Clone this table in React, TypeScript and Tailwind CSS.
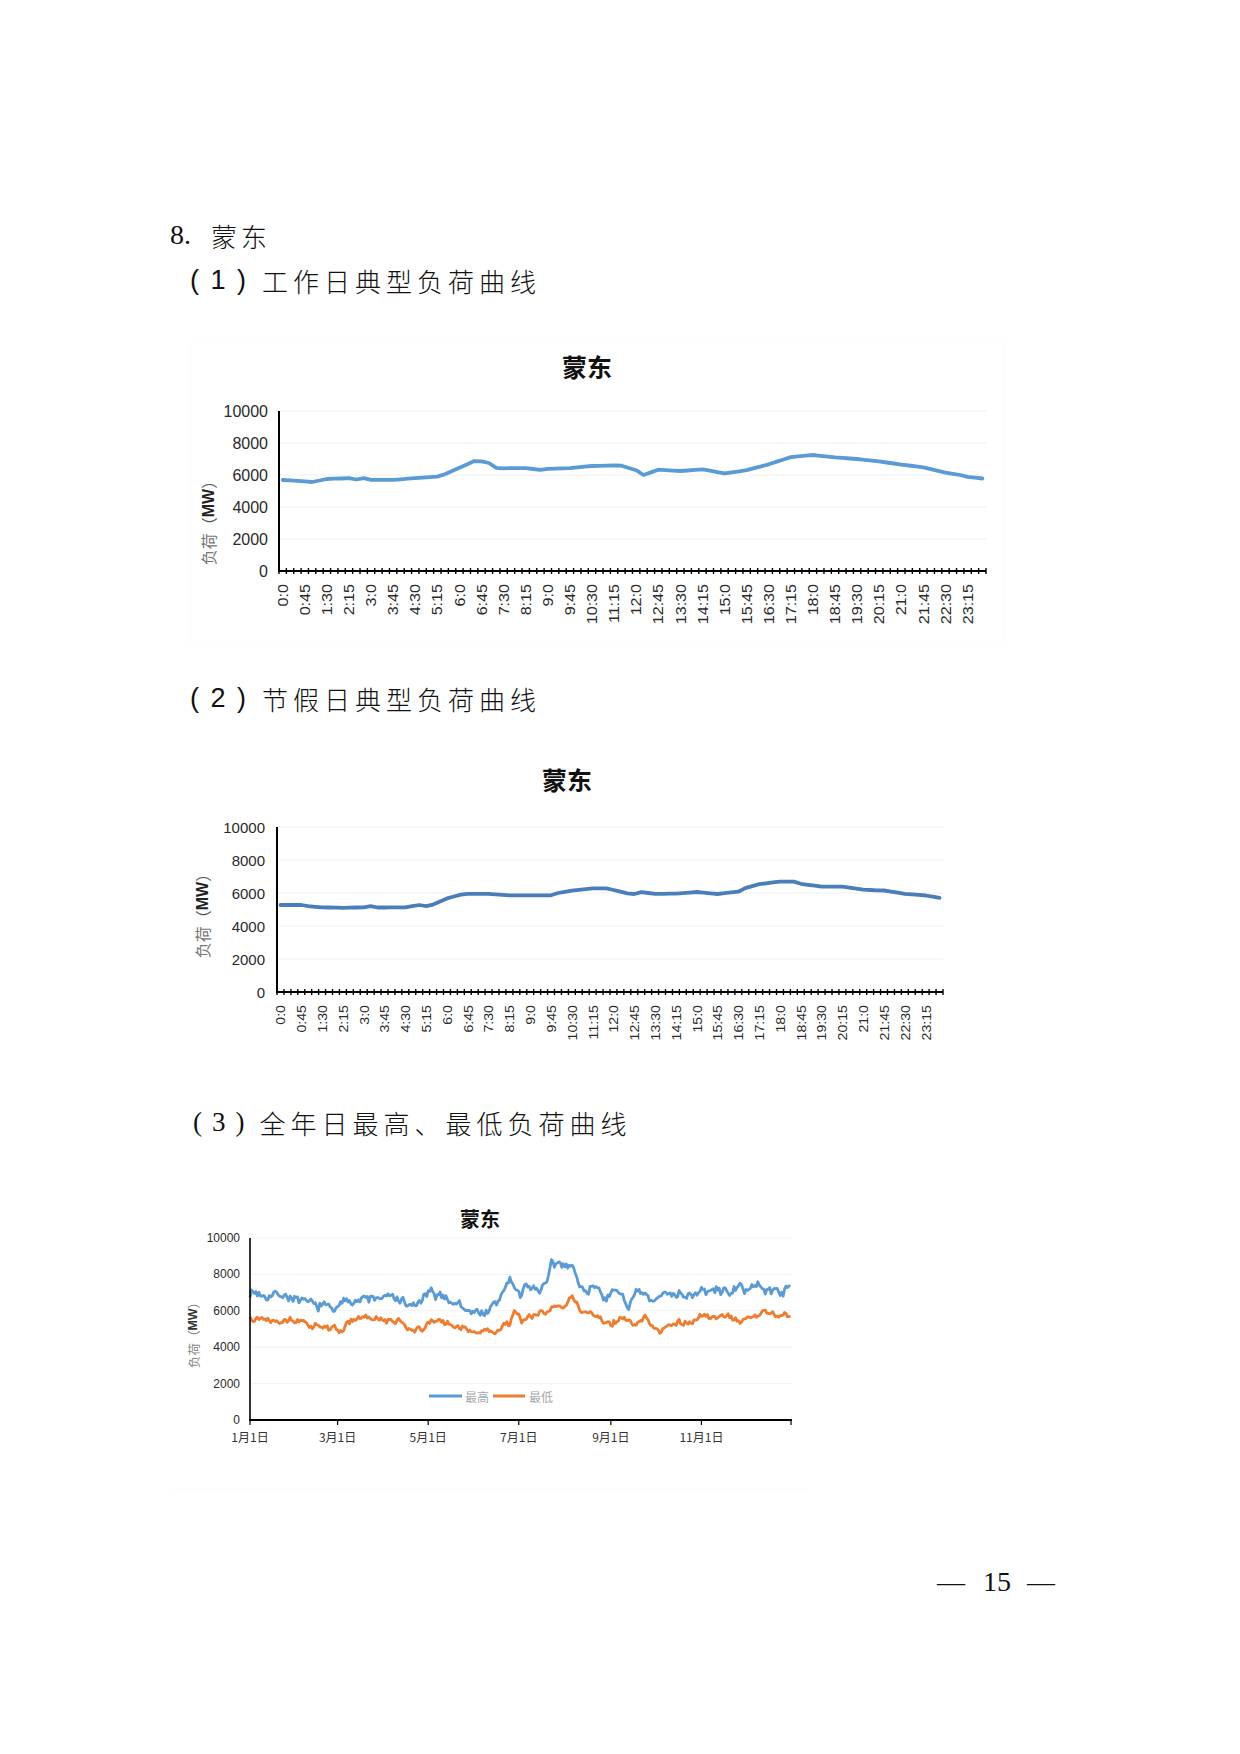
import React from "react";

type Pt = [number, number];

function interp(a: Pt[], t: number): number {
  if (t <= a[0][0]) return a[0][1];
  for (let i = 1; i < a.length; i++) {
    if (t <= a[i][0]) {
      const [t0, v0] = a[i - 1];
      const [t1, v1] = a[i];
      return v0 + ((v1 - v0) * (t - t0)) / (t1 - t0);
    }
  }
  return a[a.length - 1][1];
}

const q = (s: string) => {
  const [h, m] = s.split(":").map(Number);
  return h * 4 + m / 15;
};

function mulberry32(seed: number) {
  let a = seed;
  return () => {
    a |= 0;
    a = (a + 0x6d2b79f5) | 0;
    let t = Math.imul(a ^ (a >>> 15), 1 | a);
    t = (t + Math.imul(t ^ (t >>> 7), 61 | t)) ^ t;
    return ((t ^ (t >>> 14)) >>> 0) / 4294967296;
  };
}

const work: [string, number][] = [
  ["0:00", 5690], ["0:45", 5600], ["1:00", 5560], ["1:30", 5750], ["2:15", 5800], ["2:30", 5720],
  ["2:45", 5800], ["3:00", 5700], ["3:45", 5700], ["4:30", 5800], ["5:15", 5900], ["5:30", 6050],
  ["6:00", 6450], ["6:30", 6870], ["6:45", 6850], ["7:00", 6750], ["7:15", 6450], ["7:30", 6420],
  ["8:15", 6430], ["8:45", 6320], ["9:00", 6380], ["9:45", 6430], ["10:30", 6560], ["11:15", 6600],
  ["11:30", 6580], ["12:00", 6300], ["12:15", 6000], ["12:45", 6330], ["13:30", 6250], ["14:15", 6350],
  ["15:00", 6100], ["15:45", 6300], ["16:30", 6670], ["17:15", 7120], ["18:00", 7250], ["18:45", 7100],
  ["19:30", 7000], ["20:15", 6850], ["21:00", 6650], ["21:45", 6480], ["22:30", 6150], ["23:00", 6000],
  ["23:15", 5880], ["23:45", 5780],
];

const holiday: [string, number][] = [
  ["0:00", 5270], ["0:45", 5270], ["1:00", 5200], ["1:30", 5130], ["2:15", 5100], ["3:00", 5130],
  ["3:15", 5200], ["3:30", 5120], ["4:30", 5130], ["5:00", 5270], ["5:15", 5200], ["5:30", 5300],
  ["6:00", 5670], ["6:30", 5900], ["6:45", 5950], ["7:30", 5950], ["8:15", 5860], ["9:45", 5860],
  ["10:00", 6000], ["10:30", 6140], ["11:15", 6280], ["11:45", 6280], ["12:00", 6180], ["12:30", 5980],
  ["12:45", 5940], ["13:00", 6050], ["13:30", 5950], ["14:15", 5960], ["15:00", 6060], ["15:45", 5940],
  ["16:30", 6080], ["16:45", 6300], ["17:15", 6540], ["18:00", 6690], ["18:30", 6690], ["18:45", 6560],
  ["19:30", 6380], ["20:15", 6380], ["21:00", 6200], ["21:45", 6150], ["22:30", 5950], ["23:15", 5850],
  ["23:45", 5700],
];

const toSeries = (a: [string, number][]) => {
  const pts: Pt[] = a.map(([t, v]) => [q(t), v]);
  return Array.from({ length: 96 }, (_, i) => interp(pts, i));
};

const highAnchors: Pt[] = [
  [0, 7030], [10, 6900], [20, 6950], [30, 6700], [36, 6400], [45, 6300], [55, 6200], [59, 6050],
  [65, 6700], [75, 6600], [90, 6750], [100, 6650], [108, 6200], [112, 6300], [120, 6900], [130, 6800],
  [140, 6400], [148, 5900], [160, 6000], [166, 6300], [175, 7900], [178, 7200], [182, 6700], [186, 7400],
  [195, 7200], [200, 7500], [203, 8500], [210, 8400], [217, 8800], [222, 7200], [230, 7250], [235, 7500],
  [240, 6500], [248, 7200], [255, 6300], [262, 7000], [272, 6400], [282, 7100], [295, 6900], [305, 7000],
  [315, 7100], [325, 7150], [340, 7300], [355, 7100], [364, 7150],
];

const lowAnchors: Pt[] = [
  [0, 5660], [10, 5600], [20, 5550], [30, 5550], [40, 5200], [50, 5100], [62, 4900], [68, 5500],
  [78, 5600], [90, 5450], [100, 5400], [114, 4900], [120, 5300], [130, 5400], [140, 5100], [150, 4950],
  [155, 4800], [165, 4850], [175, 5350], [178, 6000], [183, 5500], [190, 5700], [200, 5900], [205, 6300],
  [212, 6400], [217, 6780], [224, 5860], [232, 5770], [243, 5220], [250, 5680], [260, 5130], [266, 5590],
  [276, 4850], [285, 5410], [298, 5320], [303, 5680], [312, 5600], [321, 5680], [331, 5320], [338, 5600],
  [347, 5950], [354, 5800], [364, 5770],
];

const yearSeries = (anchors: Pt[], seed: number, walk: number, white: number) => {
  const r = mulberry32(seed);
  let w = 0;
  return Array.from({ length: 365 }, (_, i) => {
    w = 0.55 * w + (r() - 0.5) * walk;
    return interp(anchors, i) + w + (r() - 0.5) * white;
  });
};

const WORK = toSeries(work);
const HOLI = toSeries(holiday);
const HIGH = yearSeries(highAnchors, 7, 420, 200);
const LOW = yearSeries(lowAnchors, 13, 260, 130);

type DayChartProps = {
  w: number;
  h: number;
  x0: number;
  x1: number;
  yTop: number;
  yBot: number;
  data: number[];
  color: string;
  titleX: number;
  titleY: number;
  titleSize: number;
  yLabelRight: number;
  yLabelSize: number;
  yTitleX: number;
  yTitleY: number;
  yTitleSize: number;
  labelTop: number;
  labelSize: number;
  labelScale: number;
};

function DayChart(p: DayChartProps) {
  const step = (p.x1 - p.x0) / 96;
  const ph = p.yBot - p.yTop;
  const yOf = (v: number) => p.yBot - (v / 10000) * ph;
  const d = p.data
    .map((v, i) => `${i ? "L" : "M"}${(p.x0 + (i + 0.5) * step).toFixed(1)},${yOf(v).toFixed(1)}`)
    .join(" ");
  const labels = Array.from({ length: 32 }, (_, k) => {
    const idx = k * 3;
    return { idx, text: `${Math.floor(idx / 4)}:${(idx % 4) * 15}` };
  });
  return (
    <svg
      width={p.w}
      height={p.h}
      viewBox={`0 0 ${p.w} ${p.h}`}
      className="block font-['Liberation_Sans','Noto_Sans_CJK_SC',sans-serif]"
    >
      <text
        x={p.titleX}
        y={p.titleY}
        textAnchor="middle"
        dominantBaseline="central"
        fontSize={p.titleSize}
        fontWeight={700}
        fill="#111"
        fontFamily="'Noto Sans CJK SC', sans-serif"
      >
        蒙东
      </text>
      {[0, 2000, 4000, 6000, 8000, 10000].map((v) => (
        <g key={v}>
          {v > 0 && <line x1={p.x0} x2={p.x1} y1={yOf(v)} y2={yOf(v)} stroke="#f0f0f0" strokeWidth={1} />}
          <text
            x={p.yLabelRight}
            y={yOf(v)}
            textAnchor="end"
            dominantBaseline="central"
            fontSize={p.yLabelSize}
            fill="#2a2a2a"
          >
            {v}
          </text>
        </g>
      ))}
      <text
        transform={`translate(${p.yTitleX},${p.yTitleY}) rotate(-90)`}
        textAnchor="middle"
        dominantBaseline="central"
        fontSize={p.yTitleSize}
      >
        <tspan fill="#777" fontFamily="'Noto Sans CJK SC', serif">负荷</tspan>
        <tspan fill="#555" fontFamily="'Noto Sans CJK SC', sans-serif">（</tspan>
        <tspan fill="#222" fontWeight={700}>MW</tspan>
        <tspan fill="#555" fontFamily="'Noto Sans CJK SC', sans-serif">）</tspan>
      </text>
      <path d={d} fill="none" stroke={p.color} strokeWidth={3.8} strokeLinejoin="round" strokeLinecap="round" />
      <line x1={p.x0} x2={p.x0} y1={p.yTop} y2={p.yBot + 1} stroke="#000" strokeWidth={2} />
      <line x1={p.x0 - 1} x2={p.x1} y1={p.yBot} y2={p.yBot} stroke="#000" strokeWidth={2} />
      {Array.from({ length: 97 }, (_, i) => (
        <line
          key={i}
          x1={p.x0 + i * step}
          x2={p.x0 + i * step}
          y1={p.yBot - 3}
          y2={p.yBot + 3}
          stroke="#000"
          strokeWidth={1.4}
        />
      ))}
      {labels.map((l) => (
        <text
          key={l.idx}
          transform={`translate(${(p.x0 + (l.idx + 0.5) * step).toFixed(1)},${p.labelTop}) rotate(-90) scale(${p.labelScale},1)`}
          textAnchor="end"
          dominantBaseline="central"
          fontSize={p.labelSize}
          fill="#2a2a2a"
        >
          {l.text}
        </text>
      ))}
    </svg>
  );
}

function YearChart() {
  const W = 635;
  const H = 295;
  const x0 = 78;
  const x1 = 620;
  const yTop = 43;
  const yBot = 225;
  const step = (x1 - x0) / 365;
  const yOf = (v: number) => yBot - (v / 10000) * (yBot - yTop);
  const mk = (arr: number[]) =>
    arr.map((v, i) => `${i ? "L" : "M"}${(x0 + i * step).toFixed(1)},${yOf(v).toFixed(1)}`).join(" ");
  const months: [number, string][] = [
    [0, "1月1日"], [59, "3月1日"], [120, "5月1日"], [181, "7月1日"], [243, "9月1日"], [304, "11月1日"], [365, ""],
  ];
  return (
    <svg
      width={W}
      height={H}
      viewBox={`0 0 ${W} ${H}`}
      className="block font-['Liberation_Sans','Noto_Sans_CJK_SC',sans-serif]"
    >
      <text
        x={308}
        y={23}
        textAnchor="middle"
        dominantBaseline="central"
        fontSize={20}
        fontWeight={700}
        fill="#111"
        fontFamily="'Noto Sans CJK SC', sans-serif"
      >
        蒙东
      </text>
      {[0, 2000, 4000, 6000, 8000, 10000].map((v) => (
        <g key={v}>
          {v > 0 && <line x1={x0} x2={x1} y1={yOf(v)} y2={yOf(v)} stroke="#f3f3f3" strokeWidth={1} />}
          <text x={68} y={yOf(v)} textAnchor="end" dominantBaseline="central" fontSize={12} fill="#2a2a2a">
            {v}
          </text>
        </g>
      ))}
      <text
        transform={`translate(21,137) rotate(-90)`}
        textAnchor="middle"
        dominantBaseline="central"
        fontSize={12.5}
      >
        <tspan fill="#888" fontFamily="'Noto Sans CJK SC', serif">负荷</tspan>
        <tspan fill="#666" fontFamily="'Noto Sans CJK SC', sans-serif">（</tspan>
        <tspan fill="#333" fontWeight={700}>MW</tspan>
        <tspan fill="#666" fontFamily="'Noto Sans CJK SC', sans-serif">）</tspan>
      </text>
      <path d={mk(HIGH)} fill="none" stroke="#5b9bd5" strokeWidth={2.8} strokeLinejoin="round" />
      <path d={mk(LOW)} fill="none" stroke="#ed7d31" strokeWidth={2.8} strokeLinejoin="round" />
      <line x1={x0} x2={x0} y1={yTop} y2={yBot + 1} stroke="#000" strokeWidth={1.6} />
      <line x1={x0 - 1} x2={x1} y1={yBot} y2={yBot} stroke="#000" strokeWidth={2.2} />
      {months.map(([d, t]) => {
        const x = Math.min(x0 + d * step, x1 - 1);
        return (
          <g key={d}>
            <line x1={x} x2={x} y1={yBot} y2={yBot + 5} stroke="#000" strokeWidth={1.2} />
            {t && (
              <text
                x={x}
                y={241}
                textAnchor="middle"
                dominantBaseline="central"
                fontSize={12}
                fill="#333"
                fontFamily="'Noto Sans CJK SC', sans-serif"
              >
                {t}
              </text>
            )}
          </g>
        );
      })}
      <line x1={257} x2={290} y1={201} y2={201} stroke="#5b9bd5" strokeWidth={3} />
      <text x={293} y={201} dominantBaseline="central" fontSize={12} fill="#a8a8a8" fontFamily="'Noto Sans CJK SC', sans-serif">
        最高
      </text>
      <line x1={321} x2={353} y1={201} y2={201} stroke="#ed7d31" strokeWidth={3} />
      <text x={357} y={201} dominantBaseline="central" fontSize={12} fill="#a8a8a8" fontFamily="'Noto Sans CJK SC', sans-serif">
        最低
      </text>
    </svg>
  );
}

const cjk = "font-['Noto_Sans_CJK_SC',sans-serif] font-light";

export default function App() {
  return (
    <div className="w-[1240px] h-[1754px] bg-white flex flex-col pt-[217px] text-[#111]">
      <div className="pl-[170px] h-[36px] flex items-center">
        <span className="font-['Liberation_Serif',serif] text-[28px]">8.</span>
        <span className={`ml-[20px] text-[26px] tracking-[4px] ${cjk}`}>蒙东</span>
      </div>

      <div className="mt-[9px] pl-[190px] h-[36px] flex items-center">
        <span className="font-['Liberation_Sans',sans-serif] text-[27px] tracking-[2px]">( 1 )</span>
        <span className={`ml-[14px] text-[26px] tracking-[5px] ${cjk}`}>工作日典型负荷曲线</span>
      </div>

      <div className="mt-[42px] ml-[190px] w-[815px] h-[305px] border border-[#fcfcfc]">
        <DayChart
          w={813}
          h={303}
          x0={88}
          x1={795}
          yTop={70}
          yBot={230}
          data={WORK}
          color="#5b9bd5"
          titleX={396}
          titleY={25}
          titleSize={25}
          yLabelRight={77}
          yLabelSize={16}
          yTitleX={17}
          yTitleY={178}
          yTitleSize={16}
          labelTop={243}
          labelSize={14}
          labelScale={1.15}
        />
      </div>

      <div className="mt-[35px] pl-[190px] h-[36px] flex items-center">
        <span className="font-['Liberation_Sans',sans-serif] text-[27px] tracking-[2px]">( 2 )</span>
        <span className={`ml-[14px] text-[26px] tracking-[5px] ${cjk}`}>节假日典型负荷曲线</span>
      </div>

      <div className="mt-[29px] ml-[190px] w-[815px] h-[310px]">
        <DayChart
          w={815}
          h={310}
          x0={87}
          x1={753}
          yTop={82}
          yBot={247}
          data={HOLI}
          color="#4a7ebb"
          titleX={377}
          titleY={34}
          titleSize={25}
          yLabelRight={75}
          yLabelSize={15}
          yTitleX={12}
          yTitleY={167}
          yTitleSize={16}
          labelTop={260}
          labelSize={13.5}
          labelScale={1.05}
        />
      </div>

      <div className="mt-[49px] pl-[193px] h-[36px] flex items-center">
        <span className="font-['Liberation_Serif',serif] text-[27px] tracking-[10px]">(3)</span>
        <span className={`ml-[5px] text-[26px] tracking-[5px] ${cjk}`}>全年日最高、最低负荷曲线</span>
      </div>

      <div className="mt-[55px] ml-[172px] w-[635px] h-[295px] border-b border-[#fafafa]">
        <YearChart />
      </div>

      <div className="mt-[74px] h-[36px] flex items-center justify-end pr-[185px] font-['Liberation_Serif',serif] text-[28px]">
        <span>—</span>
        <span className="ml-[18px]">15</span>
        <span className="ml-[16px]">—</span>
      </div>
    </div>
  );
}
